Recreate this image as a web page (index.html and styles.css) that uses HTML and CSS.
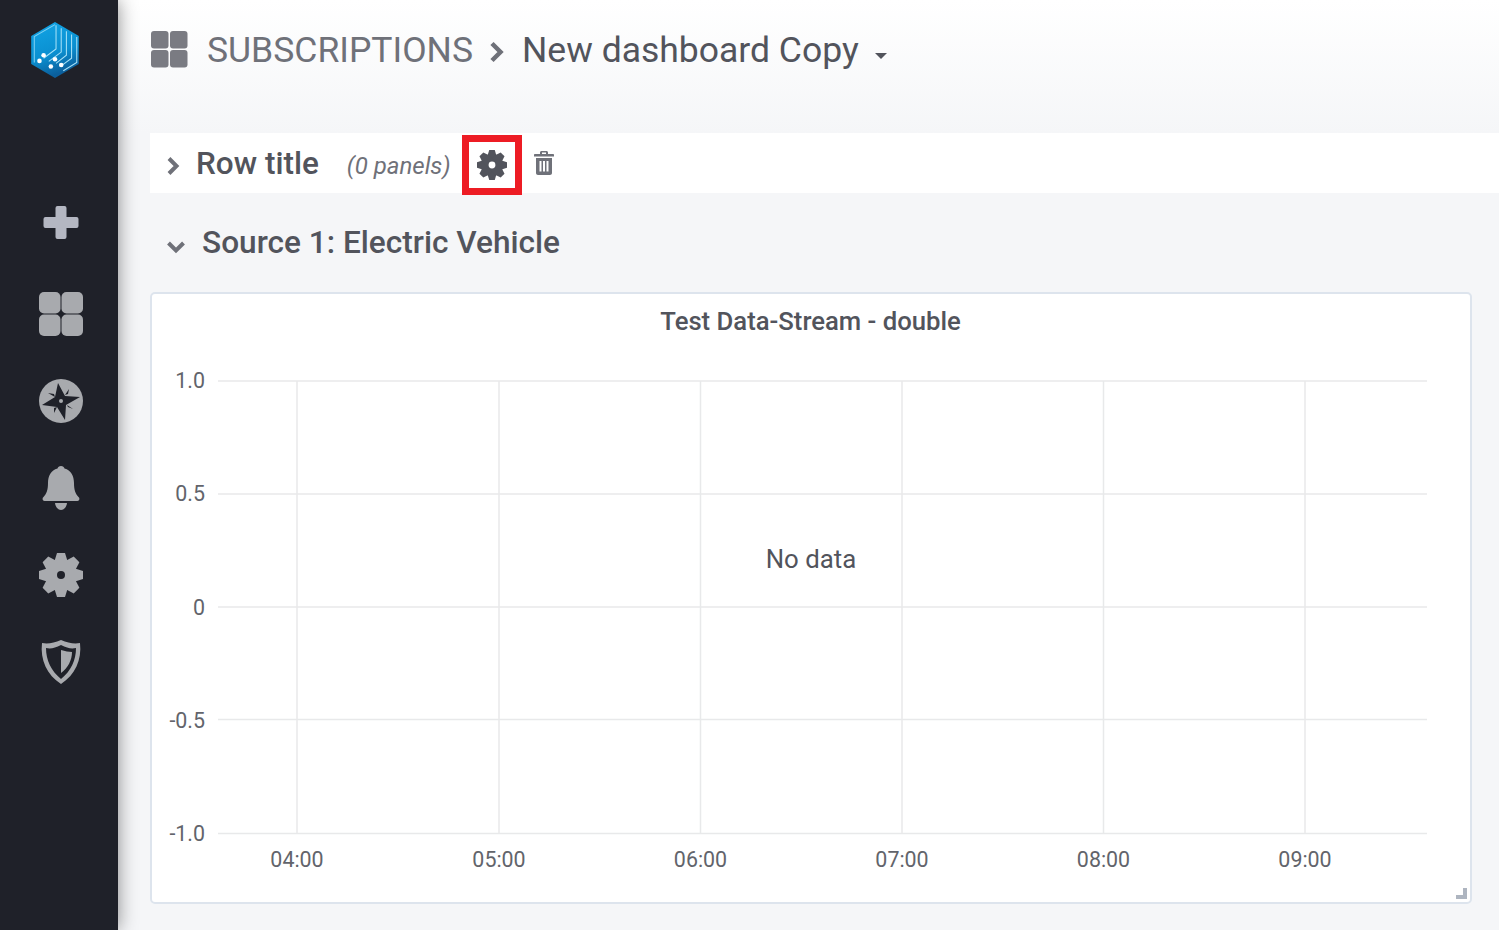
FILE: index.html
```html
<!DOCTYPE html>
<html lang="en">
  <head>
    <meta charset="UTF-8" />
    <title>New dashboard Copy</title>
    <link rel="stylesheet" href="styles.css">
  </head>
  <body>
    <svg class="defs" width="0" height="0">
      <defs>
        <g id="gear-teeth">
          <circle cx="0" cy="0" r="16" />
          <path id="gear-tooth" d="M-6.500-14-4-22H4L6.500-14V14L4 22H-4L-6.500 14Z" />
          <use href="#gear-tooth" transform="rotate(45)" />
          <use href="#gear-tooth" transform="rotate(90)" />
          <use href="#gear-tooth" transform="rotate(135)" />
        </g>
        <linearGradient id="logo-fill" x1="0" y1="0" x2="0.3" y2="1">
          <stop offset="0" stop-color="#12a5e6" />
          <stop offset="0.65" stop-color="#0a8fd0" />
          <stop offset="1" stop-color="#0b5f9c" />
        </linearGradient>
      </defs>
    </svg>

    <!-- Side menu -->
    <nav class="sidemenu">
      <svg class="logo" width="52" height="58" viewBox="0 0 50 56">
        <path d="M25 1 48 14.500V41.500L25 55 2 41.500V14.500Z" fill="url(#logo-fill)" />
        <path d="M25 3.500 5 15V40" fill="none" stroke="#7fd0f2" stroke-width="1" />
        <path d="M26 4V27L14 36M31 7V30L19 39M36 10V33L26 41M41 13V36L30 44M46 15.500V40L33 48" fill="none" stroke="#a7e2f8" stroke-width="1" />
        <circle cx="14" cy="33" r="2.200" fill="#fff" />
        <circle cx="10" cy="38.500" r="2.200" fill="#fff" />
        <circle cx="25" cy="37" r="2.200" fill="#fff" />
        <circle cx="21" cy="44" r="2.200" fill="#fff" />
        <circle cx="31" cy="42.500" r="2.200" fill="#fff" />
      </svg>
      <ul class="menu-list">
        <li class="menu-item">
          <svg width="44" height="44" viewBox="0 0 44 44">
            <path class="plus-icon" d="M18.500 1h7a2 2 0 0 1 2 2v9h10a2 2 0 0 1 2 2v7a2 2 0 0 1-2 2h-10v9a2 2 0 0 1-2 2h-7a2 2 0 0 1-2-2v-9h-10a2 2 0 0 1-2-2v-7a2 2 0 0 1 2-2h10v-9a2 2 0 0 1 2-2Z" />
          </svg>
        </li>
        <li class="menu-item">
          <svg width="44" height="44" viewBox="0 0 44 44">
            <rect x="0" y="0" width="21.500" height="21.500" rx="5" />
            <rect x="22.500" y="0" width="21.500" height="21.500" rx="5" />
            <rect x="0" y="22.500" width="21.500" height="21.500" rx="5" />
            <rect x="22.500" y="22.500" width="21.500" height="21.500" rx="5" />
          </svg>
        </li>
        <li class="menu-item">
          <svg width="44" height="44" viewBox="0 0 44 44">
            <circle cx="22" cy="22" r="22" />
            <path class="cut" d="M19 4 26 17 41 18 27 26 26 41 18 28 3 26 16 18Z" />
            <path class="cut" d="M9 14 15 15 16 18ZM30 10 29 15 26 16ZM34 30 29 28 28 26ZM15 34 15 29 18 28Z" />
            <circle cx="22" cy="22" r="2" />
          </svg>
        </li>
        <li class="menu-item">
          <svg width="44" height="44" viewBox="0 0 44 44">
            <path d="M22 0c2 0 3 1 3.500 2.500C32 4 35 10 35 17c0 7 1.500 11 4.500 14 1.500 1 1 4-1 4H5.500c-2 0-2.500-3-1-4C7.500 28 9 24 9 17 9 10 12 4 18.500 2.500 19 1 20 0 22 0Z" />
            <path d="M16 37h12c-.5 4-3 7-6 7s-5.500-3-6-7Z" />
          </svg>
        </li>
        <li class="menu-item">
          <svg width="44" height="44" viewBox="-22 -22 44 44">
            <use href="#gear-teeth" />
            <circle class="cut" r="4" />
          </svg>
        </li>
        <li class="menu-item">
          <svg width="44" height="44" viewBox="0 0 44 44">
            <path d="M22 0C29 3 35 4 41 3 43 20 36 35 22 44 8 35 1 20 3 3 9 4 15 3 22 0Z" />
            <path class="cut" d="M22 5C28 8 32 9 37 8 37 20 32 31 22 39 12 31 7 20 7 8 12 9 16 8 22 5Z" />
            <path d="M22 10C26 11 30 12 33 12 33 20 29 28 22 33Z" />
          </svg>
        </li>
      </ul>
    </nav>

    <main class="content">
      <header class="page-header">
        <svg class="header-icon" width="37" height="37" viewBox="0 0 37 37">
          <rect x="0" y="0" width="17.500" height="17.500" rx="3" />
          <rect x="19" y="0" width="17.500" height="17.500" rx="3" />
          <rect x="0" y="19" width="17.500" height="17.500" rx="3" />
          <rect x="19" y="19" width="17.500" height="17.500" rx="3" />
        </svg>
        <span class="crumb-folder">SUBSCRIPTIONS</span>
        <svg class="crumb-sep" width="16" height="22" viewBox="0 0 16 22">
          <path d="M3 2.500 11.500 11 3 19.500" />
        </svg>
        <span class="crumb-title">New dashboard Copy</span>
        <svg class="crumb-caret" width="14" height="8" viewBox="0 0 14 8">
          <path d="M1 1H13L7 7Z" />
        </svg>
      </header>

      <!-- Collapsed row -->
      <section class="row-bar">
        <svg class="chevron" width="14" height="20" viewBox="0 0 14 20">
          <path d="M3 2.500 10.500 10 3 17.500" />
        </svg>
        <span class="row-title">Row title</span>
        <span class="row-count">(0 panels)</span>
        <span class="row-settings">
          <svg width="30" height="30" viewBox="-22 -22 44 44">
            <use href="#gear-teeth" />
            <circle class="gear-hole" r="5" />
          </svg>
        </span>
        <svg class="row-trash" width="22" height="24" viewBox="0 0 22 24">
          <path d="M7 3V1.500C7 .7 7.700 0 8.500 0h5c.8 0 1.500.7 1.500 1.500V3h5c.6 0 1 .4 1 1v1.500H1V4c0-.6.4-1 1-1ZM9 1.500V3h4V1.500Z" />
          <path fill-rule="evenodd" d="M3 7h16v15c0 1.100-.9 2-2 2H5c-1.100 0-2-.9-2-2ZM6.500 10v10.500h2V10Zm3.500 0v10.500h2V10Zm3.500 0v10.500h2V10Z" />
        </svg>
      </section>

      <section class="source-row">
        <svg class="chevron" width="20" height="14" viewBox="0 0 20 14">
          <path d="M2.500 3 10 10.500 17.500 3" />
        </svg>
        <span class="source-title">Source 1: Electric Vehicle</span>
      </section>

      <section class="panel">
        <h3 class="panel-title">Test Data-Stream - double</h3>
        <svg class="chart" width="1320" height="566" viewBox="150 338 1320 566">
          <g class="grid">
            <line x1="218" x2="1427" y1="381" y2="381" />
            <line x1="218" x2="1427" y1="494" y2="494" />
            <line x1="218" x2="1427" y1="607" y2="607" />
            <line x1="218" x2="1427" y1="719.500" y2="719.500" />
            <line x1="218" x2="1427" y1="833.500" y2="833.500" />
            <line x1="297" x2="297" y1="381" y2="833" />
            <line x1="499" x2="499" y1="381" y2="833" />
            <line x1="700.500" x2="700.500" y1="381" y2="833" />
            <line x1="902" x2="902" y1="381" y2="833" />
            <line x1="1103.500" x2="1103.500" y1="381" y2="833" />
            <line x1="1305" x2="1305" y1="381" y2="833" />
          </g>
          <g class="y-labels">
            <text x="205" y="388">1.0</text>
            <text x="205" y="501">0.5</text>
            <text x="205" y="615">0</text>
            <text x="205" y="728">-0.5</text>
            <text x="205" y="841">-1.0</text>
          </g>
          <g class="x-labels">
            <text x="297" y="867">04:00</text>
            <text x="499" y="867">05:00</text>
            <text x="700.500" y="867">06:00</text>
            <text x="902" y="867">07:00</text>
            <text x="1103.500" y="867">08:00</text>
            <text x="1305" y="867">09:00</text>
          </g>
          <text class="no-data" x="811" y="568">No data</text>
        </svg>
        <span class="resize-handle"></span>
      </section>
    </main>
  </body>
</html>
```

FILE: styles.css
```css
html,
body {
  height: 100%;
}
body {
  margin: 0;
  display: flex;
  overflow: hidden;
  font-family: Roboto, "Liberation Sans", sans-serif;
  background-color: #f5f6f8;
  color: #52545c;
}
.defs {
  position: absolute;
}

/* side menu */
.sidemenu {
  flex: 0 0 118px;
  display: flex;
  flex-direction: column;
  align-items: center;
  background-color: #1f2129;
  box-shadow: 0 0 18px rgba(0, 0, 0, 0.45);
  position: relative;
  z-index: 2;
}
.logo {
  margin: 21px 8px 0 0;
}
.menu-list {
  list-style: none;
  margin: 0;
  padding: 0;
  display: flex;
  flex-direction: column;
  gap: 43px;
  margin-top: 126px;
  margin-left: 4px;
}
.menu-item {
  height: 44px;
}
.menu-item svg {
  display: block;
  fill: #a8aaae;
}
.menu-item .plus-icon {
  fill: #b4b7c2;
}
.menu-item .cut {
  fill: #1f2129;
}

/* header */
.content {
  flex: 1;
  min-width: 0;
  padding-left: 32px;
}
.page-header {
  height: 133px;
  margin-left: -32px;
  padding-left: 33px;
  box-sizing: border-box;
  display: flex;
  align-items: flex-start;
  background: linear-gradient(#fff, #f5f6f8 100%);
}
.header-icon {
  margin-top: 31px;
  fill: #7a7b82;
}
.crumb-folder {
  margin-left: 19px;
  margin-top: 29px;
  font-size: 35.500px;
  line-height: 42px;
  color: #6f7179;
}
.crumb-sep {
  margin: 41px 0 0 16px;
}
.crumb-sep path {
  fill: none;
  stroke: #6f7179;
  stroke-width: 4.500;
}
.crumb-title {
  margin-left: 17px;
  margin-top: 29px;
  font-size: 35.500px;
  line-height: 42px;
  color: #52545c;
}
.crumb-caret {
  margin: 52px 0 0 15px;
  fill: #52545c;
}

/* rows */
.row-bar {
  height: 60px;
  display: flex;
  align-items: center;
  background-color: #fff;
}
.chevron path {
  fill: none;
  stroke: #6f7179;
  stroke-width: 4;
}
.row-bar .chevron {
  margin: 6px 0 0 16px;
}
.row-title {
  margin-left: 16px;
  font-size: 31.500px;
  font-weight: 500;
}
.row-count {
  margin: 6px 0 0 28px;
  font-size: 24px;
  font-style: italic;
  color: #6f7179;
}
.row-settings {
  width: 60px;
  height: 60px;
  margin: 4px 0 0 11px;
  box-sizing: border-box;
  border: 7px solid #ed1c24;
  display: flex;
  align-items: center;
  justify-content: center;
}
.row-settings svg {
  fill: #52545c;
}
.gear-hole {
  fill: #fff;
}
.row-trash {
  margin: 0 0 1px 11px;
  fill: #6f7179;
}
.source-row {
  height: 99px;
  display: flex;
  align-items: center;
  padding-bottom: 2px;
  box-sizing: border-box;
}
.source-row .chevron {
  margin: 10px 0 0 16px;
}
.source-title {
  margin-left: 16px;
  margin-top: 2px;
  font-size: 31.600px;
  font-weight: 500;
}

/* panel */
.panel {
  position: relative;
  width: 1322px;
  height: 612px;
  box-sizing: border-box;
  background-color: #fff;
  border: 2px solid #dde4ed;
  border-radius: 5px;
}
.panel-title {
  margin: 0;
  height: 44px;
  text-align: center;
  font-size: 25.700px;
  font-weight: 500;
  line-height: 54px;
  padding-right: 1px;
}
.chart {
  display: block;
  margin-left: -2px;
}
.grid line {
  stroke: #e8e9ea;
  stroke-width: 1.500;
}
.y-labels text,
.x-labels text {
  font-size: 21.400px;
  fill: #62646b;
}
.y-labels text {
  text-anchor: end;
}
.x-labels text {
  text-anchor: middle;
}
.no-data {
  font-size: 25.800px;
  text-anchor: middle;
  fill: #52545c;
}
.resize-handle {
  position: absolute;
  right: 3px;
  bottom: 3px;
  width: 7px;
  height: 7px;
  border-right: 4px solid #aeb5c0;
  border-bottom: 4px solid #aeb5c0;
}
```
